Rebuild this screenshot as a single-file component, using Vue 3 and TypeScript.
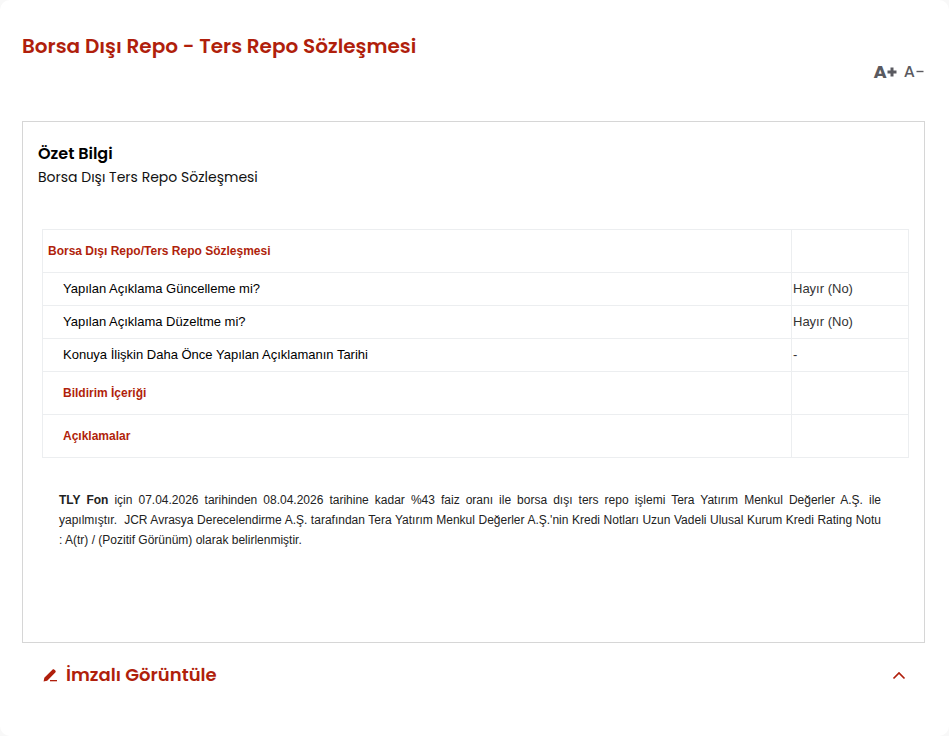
<script setup lang="ts">
const rows = [
  { label: 'Yapılan Açıklama Güncelleme mi?', value: 'Hayır (No)' },
  { label: 'Yapılan Açıklama Düzeltme mi?', value: 'Hayır (No)' },
  { label: 'Konuya İlişkin Daha Önce Yapılan Açıklamanın Tarihi', value: '-' },
]
</script>

<template>
  <div class="page">
    <h1 class="title">Borsa Dışı Repo - Ters Repo Sözleşmesi</h1>
    <div class="font-tools">
      <span class="a-plus">A<svg width="10" height="10" viewBox="0 0 10 10"><path d="M3.5 0.5h3v3h3v3h-3v3h-3v-3h-3v-3h3z" fill="#5a5a60"/></svg></span>
      <span class="a-minus">A<svg width="8" height="10" viewBox="0 0 8 10"><rect x="0.5" y="3.8" width="7" height="1.4" fill="#5a5a60"/></svg></span>
    </div>
    <section class="box">
      <h2 class="summary">Özet Bilgi</h2>
      <p class="sub">Borsa Dışı Ters Repo Sözleşmesi</p>
      <table class="tbl">
        <tbody>
          <tr class="tall">
            <td class="red first">Borsa Dışı Repo/Ters Repo Sözleşmesi</td>
            <td></td>
          </tr>
          <tr v-for="r in rows" :key="r.label" class="norm">
            <td class="ind lift">{{ r.label }}</td>
            <td class="val lift">{{ r.value }}</td>
          </tr>
          <tr class="tall">
            <td class="red ind">Bildirim İçeriği</td>
            <td></td>
          </tr>
          <tr class="tall">
            <td class="red ind">Açıklamalar</td>
            <td></td>
          </tr>
        </tbody>
      </table>
      <p class="body"><b>TLY Fon</b> için 07.04.2026 tarihinden 08.04.2026 tarihine kadar %43 faiz oranı ile borsa dışı ters repo işlemi Tera Yatırım Menkul Değerler A.Ş. ile yapılmıştır.&nbsp; JCR Avrasya Derecelendirme A.Ş. tarafından Tera Yatırım Menkul Değerler A.Ş.'nin Kredi Notları Uzun Vadeli Ulusal Kurum Kredi Rating Notu : A(tr) / (Pozitif Görünüm) olarak belirlenmiştir.</p>
    </section>
    <div class="signed">
      <span class="signed-left">
        <svg width="15" height="14" viewBox="0 0 15 14"><path d="M0.6 13.4l.7-3.6L9.4 1.7c.6-.6 1.4-.6 2 0l.9.9c.6.6.6 1.4 0 2l-8.1 8.1z" fill="#b01f0c"/><rect x="7" y="12" width="7" height="1.3" fill="#b01f0c"/></svg>
        <span class="signed-text">İmzalı Görüntüle</span>
      </span>
      <svg class="chev" width="14" height="9" viewBox="0 0 14 9"><path d="M1.5 7.5L7 2l5.5 5.5" fill="none" stroke="#b01f0c" stroke-width="1.7"/></svg>
    </div>
  </div>
</template>

<style>
html, body { background: #f8f8f8; margin: 0; }
</style>

<style scoped>
.page {
  width: 949px;
  height: 736px;
  box-sizing: border-box;
  padding: 33px 25px 0 22px;
  overflow: hidden;
  font-family: "Liberation Sans", Arial, sans-serif;
  background: #fff;
  border-radius: 10px;
}
.title {
  margin: 0;
  font-family: Poppins, "Open Sans", sans-serif;
  font-weight: 600;
  font-size: 20px;
  line-height: 27px;
  color: #b01f0c;
}
.font-tools {
  display: flex;
  justify-content: flex-end;
  align-items: center;
  gap: 7px;
  height: 22px;
  margin-top: 1px;
}
.a-plus { font: 700 18px/1 Poppins, "Open Sans", sans-serif; color: #5a5a60; display: flex; align-items: center; gap: 0; }
.a-minus { font: 500 16px/1 Poppins, "Open Sans", sans-serif; color: #5a5a60; display: flex; align-items: center; gap: 1px; }
.box {
  margin-top: 38px;
  margin-right: -1px;
  height: 522px;
  box-sizing: border-box;
  border: 1px solid #d6d6d6;
  padding: 22px 15px 0;
}
.summary {
  margin: 0;
  font: 600 16px/20px Poppins, "Open Sans", sans-serif;
  color: #000;
}
.sub {
  margin: 3px 0 0;
  font: 400 14px/20px Poppins, "Open Sans", sans-serif;
  color: #111;
}
.tbl {
  margin: 42px 0 0 4px;
  width: 867px;
  border-collapse: collapse;
  table-layout: fixed;
  font-size: 13px;
}
.tbl td { border: 1px solid #eceef0; padding: 0; color: #000; }
.tbl td:first-child { width: 743px; }
.tall { height: 43px; }
.norm { height: 33px; }
.lift { padding-bottom: 1px !important; }
.first { padding-left: 5px !important; }
.ind { padding-left: 20px !important; }
.red { color: #b01f0c !important; font-weight: 700; font-size: 12px; }
.val { padding-left: 1px !important; color: #333 !important; }
.body {
  margin: 32px 0 0;
  padding: 0 28px 0 21px;
  font-size: 12px;
  line-height: 20px;
  text-align: justify;
  color: #222;
}
.signed {
  display: flex;
  align-items: center;
  justify-content: space-between;
  margin-top: 20px;
  padding: 0 18px 0 21px;
}
.signed-left { display: flex; align-items: center; gap: 8px; }
.signed-text {
  font-family: Poppins, "Open Sans", sans-serif;
  font-weight: 600;
  font-size: 18px;
  line-height: 24px;
  color: #b01f0c;
}
</style>
